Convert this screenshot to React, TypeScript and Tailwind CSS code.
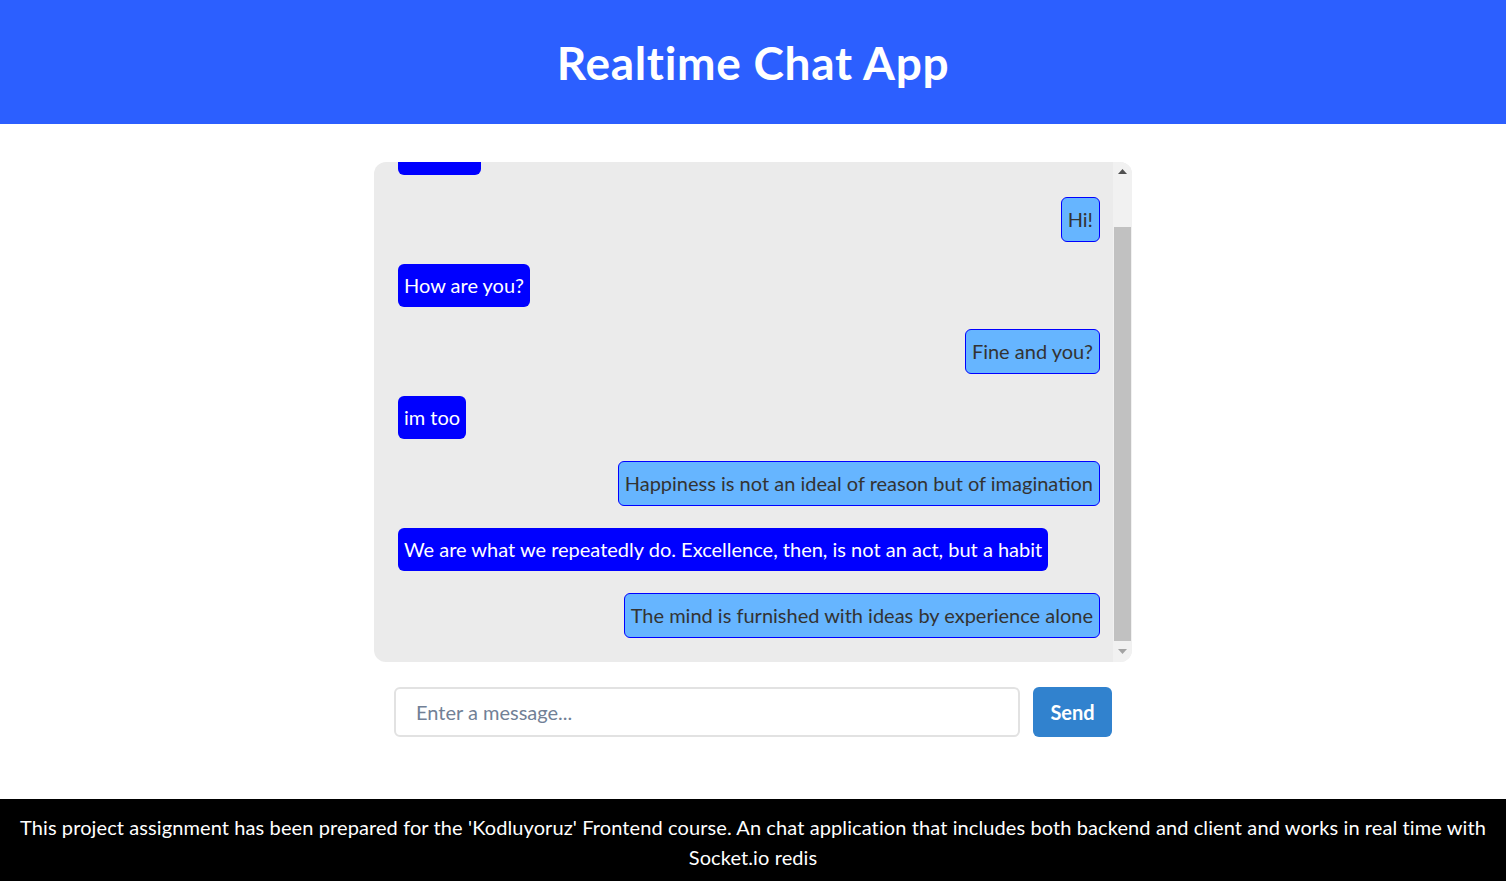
import { useEffect, useRef } from 'react';

type Msg = { text: string; fromMe: boolean };

const messages: Msg[] = [
  { text: 'Hi there', fromMe: false },
  { text: 'Hi!', fromMe: true },
  { text: 'How are you?', fromMe: false },
  { text: 'Fine and you?', fromMe: true },
  { text: 'im too', fromMe: false },
  { text: 'Happiness is not an ideal of reason but of imagination', fromMe: true },
  { text: 'We are what we repeatedly do. Excellence, then, is not an act, but a habit', fromMe: false },
  { text: 'The mind is furnished with ideas by experience alone', fromMe: true },
];

// the browser's own scrollbar is hidden, so draw the classic one next to the list
function ScrollBar() {
  return (
    <div className="w-[19px] h-full bg-[#f1f1f1] flex flex-col shrink-0 px-[1px]">
      <div className="h-[17px] flex items-center justify-center pt-[2px]">
        <svg width="9" height="5" viewBox="0 0 9 5">
          <path d="M0 5 L4.5 0 L9 5 Z" fill="#505050" />
        </svg>
      </div>
      <div className="h-[48px]" />
      <div className="h-[414px] bg-[#c1c1c1]" />
      <div className="flex-1" />
      <div className="h-[17px] flex items-center justify-center pb-[4px]">
        <svg width="9" height="5" viewBox="0 0 9 5">
          <path d="M0 0 L4.5 5 L9 0 Z" fill="#a3a3a3" />
        </svg>
      </div>
    </div>
  );
}

function ChatList() {
  const ref = useRef<HTMLDivElement>(null);

  // always show the newest message
  useEffect(() => {
    if (ref.current) ref.current.scrollTop = ref.current.scrollHeight;
  }, []);

  return (
    <div className="w-[758px] h-[500px] mx-auto bg-[#ebebeb] rounded-xl overflow-hidden flex">
      <div
        ref={ref}
        className="flex-1 h-full overflow-y-scroll [scrollbar-width:none] pt-[26px] pb-[24px] pl-6 pr-[13px] flex flex-col gap-[22px]"
      >
        {messages.map((m, i) => (
          <div key={i} className={`flex ${m.fromMe ? 'justify-end' : 'justify-start'}`}>
            <div
              className={
                m.fromMe
                  ? 'bg-[#66b5ff] border border-[#0000ff] text-[#333333] rounded-md px-[6px] py-[7px] text-[20px] leading-[29px]'
                  : 'bg-[#0000ff] text-white rounded-md px-[6px] py-[7px] text-[20px] leading-[29px]'
              }
            >
              {m.text}
            </div>
          </div>
        ))}
      </div>
      <ScrollBar />
    </div>
  );
}

export default function App() {
  return (
    <div className="min-h-screen flex flex-col bg-white font-['Lato','Noto_Sans',sans-serif]">
      <header className="h-[124px] bg-[#2c5fff] flex items-center justify-center">
        <h1 className="text-white text-[46px] font-bold tracking-[0.7px]">Realtime Chat App</h1>
      </header>

      <main className="flex-1 pt-[38px]">
        <ChatList />
        <form
          className="w-[718px] mx-auto mt-[25px] flex gap-[13px]"
          onSubmit={(e) => e.preventDefault()}
        >
          <input
            className="flex-1 h-[50px] border-2 border-[#e2e2e2] rounded-md px-5 text-[20px] text-[#333] placeholder:text-[#718096] outline-none"
            placeholder="Enter a message..."
          />
          <button
            type="submit"
            className="w-[79px] h-[50px] bg-[#3182ce] text-white font-bold text-[20px] rounded-md"
          >
            Send
          </button>
        </form>
      </main>

      <footer className="bg-black text-white text-center text-[20px] tracking-[0.1px] leading-[30px] px-4 pt-[13px] pb-[9px] mt-[62px]">
        This project assignment has been prepared for the 'Kodluyoruz' Frontend course. An chat
        application that includes both backend and client and works in real time with Socket.io redis
      </footer>
    </div>
  );
}
